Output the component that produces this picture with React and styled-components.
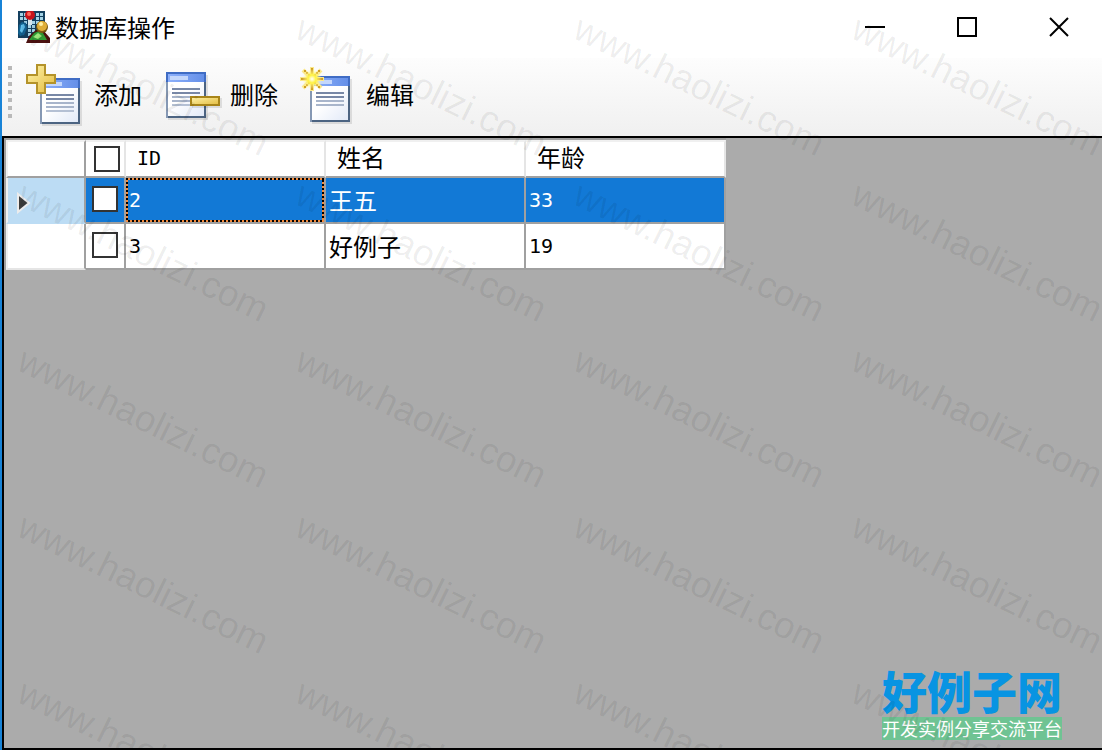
import React, { useState } from 'react';
import styled, { createGlobalStyle } from 'styled-components';

const initialRows = [
  { id: '2', name: '王五', age: '33' },
  { id: '3', name: '好例子', age: '19' },
];

const watermarks = Array.from({ length: 20 }, (_, i) => i);
const gripDots = Array.from({ length: 7 }, (_, i) => i);

const AppIcon = () => (
  <svg width="32" height="32" viewBox="0 0 32 32" aria-hidden="true">
    <rect width="27" height="27" fill="#14405f" />
    <path
      d="M2 2h3v3H2zM6 2h3v3H6zM18 2h3v3h-3zM22 2h3v3h-3zM2 6h3v3H2zM6 6h3v3H6zM18 6h3v3h-3zM22 6h3v3h-3zM6 10h3v3H6zM14 10h3v3h-3zM18 10h3v3h-3zM10 14h3v3h-3zM14 14h3v3h-3zM10 18h3v3h-3zM14 18h3v3h-3zM10 22h3v3h-3z"
      fill="#a4d3e6"
    />
    <path d="M10 8h4v6h-4z" fill="#d7e6ec" />
    <circle cx="12" cy="4" r="5" fill="#c8141b" />
    <circle cx="11" cy="3" r="2" fill="#ff6a5c" />
    <path d="M1 14l3-3 4 1 1 5-3 7-4 1-2-3z" fill="#12618f" />
    <path d="M3 14l3-1 1 3-3 6-2-2z" fill="#5fc0ee" />
    <path d="M8 32l3-7 7-6h7l7 8v5z" fill="#4b1110" />
    <path d="M11 29l5-7 5-2 4 2 4 7z" fill="#2f9b35" />
    <path d="M15 26l5-4 4 3-4 3z" fill="#9be67a" />
    <circle cx="24" cy="16" r="6" fill="#7a5b12" />
    <circle cx="24" cy="15" r="5" fill="#dfae38" />
    <circle cx="23" cy="13" r="2" fill="#fff0a6" />
  </svg>
);

const Sheet = ({ x, y, lines }) => (
  <g transform={`translate(${x} ${y})`}>
    <path d="M2 3h40v45H2z" fill="#000" opacity="0.1" />
    <rect width="40" height="46" fill="#4c6482" />
    <rect width="2" height="46" fill="#8598b4" />
    <rect x="2" y="10" width="36" height="34" fill="url(#paper)" />
    <rect width="40" height="10" fill="#3f6cc4" />
    <rect x="2" y="2" width="36" height="8" fill="url(#caption)" />
    <rect x="4" y="4" width="18" height="4" fill="#c4d7fb" />
    <path d="M6 16h28v2H6zM6 20h28v2H6z" fill="#7888a6" />
    <path d="M6 24h28v2H6zM6 28h28v2H6z" fill="#a8b5cb" />
    {lines > 4 && <path d="M6 32h28v2H6z" fill="#b4c0d4" />}
  </g>
);

const IconDefs = () => (
  <defs>
    <linearGradient id="paper" x1="0" y1="0" x2="1" y2="1">
      <stop offset="0.4" stopColor="#ffffff" />
      <stop offset="1" stopColor="#e2eaf8" />
    </linearGradient>
    <linearGradient id="caption">
      <stop offset="0" stopColor="#8db0fa" />
      <stop offset="1" stopColor="#648fe8" />
    </linearGradient>
    <linearGradient id="gold" x1="0" y1="0" x2="1" y2="1">
      <stop offset="0" stopColor="#fff3a8" />
      <stop offset="1" stopColor="#e3bb3f" />
    </linearGradient>
    <radialGradient id="spark">
      <stop offset="0" stopColor="#ffffff" />
      <stop offset="0.4" stopColor="#fff23e" />
      <stop offset="1" stopColor="#fff7b8" stopOpacity="0" />
    </radialGradient>
  </defs>
);

const AddIcon = () => (
  <svg width="64" height="64" viewBox="0 0 64 64" aria-hidden="true">
    <IconDefs />
    <Sheet x={16} y={16} lines={5} />
    <path
      d="M13 3h8v10h10v8H21v10h-8V21H3v-8h10z"
      fill="url(#gold)"
      stroke="#b4932a"
      strokeWidth="2"
    />
  </svg>
);

const DeleteIcon = () => (
  <svg width="64" height="64" viewBox="0 0 64 64" aria-hidden="true">
    <Sheet x={6} y={10} lines={5} />
    <path d="M32 36h30v10H32z" fill="#000" opacity="0.1" />
    <rect x="31" y="35" width="28" height="8" fill="url(#gold)" stroke="#a88519" strokeWidth="2" />
  </svg>
);

const EditIcon = () => (
  <svg width="64" height="64" viewBox="0 0 64 64" aria-hidden="true">
    <Sheet x={14} y={14} lines={4} />
    <path
      d="M16 5v24M4 17h24M7 8l18 18M25 8L7 26"
      stroke="#fbe88a"
      strokeWidth="4"
    />
    <path
      d="M15 6h2v6h-2zM15 22h2v6h-2zM5 16h6v2H5zM21 16h6v2h-6zM8 8h2v2h2v2h2v2h-2v-2h-2v-2H8zM24 8h-2v2h-2v2h-2v2h2v-2h2v-2h2zM8 26h2v-2h2v-2h2v-2h-2v2h-2v2H8zM24 26h-2v-2h-2v-2h-2v-2h2v2h2v2h2z"
      fill="#cf9f24"
    />
    <circle cx="16" cy="17" r="10" fill="url(#spark)" />
  </svg>
);

const App = () => {
  const [selected, setSelected] = useState('2');
  const [checked, setChecked] = useState({});

  const toggle = (id) => setChecked({ ...checked, [id]: !checked[id] });

  const allChecked = initialRows.every((row) => checked[row.id]);

  const toggleAll = () => {
    const next = {};
    initialRows.forEach((row) => {
      next[row.id] = !allChecked;
    });
    setChecked(next);
  };

  return (
    <Window>
      <GlobalStyle />
      <TitleBar>
        <AppIcon />
        <Title>数据库操作</Title>
        <WindowControls>
          <ControlButton type="button" aria-label="最小化">
            <svg width="20" height="20" viewBox="0 0 20 20">
              <path d="M0 10h20" />
            </svg>
          </ControlButton>
          <ControlButton type="button" aria-label="最大化">
            <svg width="20" height="20" viewBox="0 0 20 20">
              <path d="M1 1h18v18H1z" />
            </svg>
          </ControlButton>
          <ControlButton type="button" aria-label="关闭">
            <svg width="20" height="20" viewBox="0 0 20 20">
              <path d="M1 1l18 18M19 1L1 19" />
            </svg>
          </ControlButton>
        </WindowControls>
      </TitleBar>

      <ToolBar>
        <Grip>
          {gripDots.map((dot) => (
            <GripDot key={dot} />
          ))}
        </Grip>
        <ToolButton type="button">
          <AddIcon />
          添加
        </ToolButton>
        <ToolButton type="button">
          <DeleteIcon />
          删除
        </ToolButton>
        <ToolButton type="button">
          <EditIcon />
          编辑
        </ToolButton>
      </ToolBar>

      <GridPanel>
        <DataGrid>
          <colgroup>
            <Col $width={80} />
            <Col $width={40} />
            <Col $width={200} />
            <Col $width={200} />
            <Col $width={200} />
          </colgroup>
          <thead>
            <tr>
              <CornerCell />
              <CheckHeader>
                <CheckBox
                  type="checkbox"
                  aria-label="全选"
                  checked={allChecked}
                  onChange={toggleAll}
                />
              </CheckHeader>
              <HeaderCell $latin>ID</HeaderCell>
              <HeaderCell>姓名</HeaderCell>
              <HeaderCell>年龄</HeaderCell>
            </tr>
          </thead>
          <tbody>
            {initialRows.map((row) => {
              const active = row.id === selected;
              return (
                <tr key={row.id} onClick={() => setSelected(row.id)}>
                  <RowHeader $active={active}>
                    {active && (
                      <svg width="16" height="22" viewBox="0 0 16 22">
                        <path d="M2 2l11 9L2 20z" fill="#3c3c3c" stroke="#ececec" strokeWidth="2" />
                      </svg>
                    )}
                  </RowHeader>
                  <CheckCell $active={active}>
                    <CheckBox
                      type="checkbox"
                      aria-label={`选择 ${row.name}`}
                      checked={!!checked[row.id]}
                      onChange={() => toggle(row.id)}
                    />
                  </CheckCell>
                  <Cell $latin $active={active} $focused={active}>
                    {row.id}
                  </Cell>
                  <Cell $active={active}>{row.name}</Cell>
                  <Cell $latin $active={active}>
                    {row.age}
                  </Cell>
                </tr>
              );
            })}
          </tbody>
        </DataGrid>
      </GridPanel>

      <SiteMark>
        <SiteName>好例子网</SiteName>
        <SiteSlogan>开发实例分享交流平台</SiteSlogan>
      </SiteMark>

      <WatermarkLayer aria-hidden="true">
        {watermarks.map((mark) => (
          <WatermarkTile key={mark}>
            <WatermarkText>www.haolizi.com</WatermarkText>
          </WatermarkTile>
        ))}
      </WatermarkLayer>
    </Window>
  );
};

const GlobalStyle = createGlobalStyle`
  * {
    box-sizing: border-box;
  }

  body {
    margin: 0;
    background: #ffffff;
    font-family: 'Noto Sans CJK SC', sans-serif;
  }
`;

const Window = styled.div`
  position: relative;
  display: flex;
  flex-direction: column;
  min-height: 100vh;
  overflow: hidden;
  border-left: 2px solid #1883d7;
  background: #ffffff;
  color: #000000;
`;

const TitleBar = styled.header`
  display: flex;
  align-items: center;
  height: 58px;
  padding: 0 33px 5px 16px;
`;

const Title = styled.h1`
  margin: 0 0 0 5px;
  font-size: 24px;
  font-weight: 400;
  line-height: 32px;
`;

const WindowControls = styled.div`
  display: flex;
  gap: 72px;
  margin-left: auto;
`;

const ControlButton = styled.button`
  display: flex;
  padding: 0;
  border: none;
  background: none;

  svg {
    fill: none;
    stroke: #000000;
    stroke-width: 2;
  }
`;

const ToolBar = styled.div`
  display: flex;
  align-items: center;
  gap: 18px;
  height: 78px;
  padding: 0 6px;
  background: linear-gradient(#fdfdfd, #f0f0f0);
`;

const Grip = styled.div`
  display: flex;
  flex-direction: column;
  gap: 4px;
  width: 4px;
  margin-right: -6px;
  padding-bottom: 10px;
`;

const GripDot = styled.span`
  height: 4px;
  background: #b9b9b9;
`;

const ToolButton = styled.button`
  display: flex;
  align-items: center;
  gap: 6px;
  padding: 0 0 6px;
  border: none;
  background: none;
  color: #000000;
  font-family: inherit;
  font-size: 24px;
  line-height: 32px;
`;

const GridPanel = styled.main`
  flex: 1;
  border: 2px solid #000000;
  border-right: none;
  background: #ababab;
`;

const DataGrid = styled.table`
  width: 722px;
  table-layout: fixed;
  border-collapse: separate;
  border-spacing: 0;
  border-top: 2px solid #a0a0a0;
  border-left: 2px solid #a0a0a0;
`;

const Col = styled.col`
  width: ${(props) => props.$width}px;
`;

const HeaderCell = styled.th`
  height: 38px;
  padding: 0 11px ${(props) => (props.$latin ? 2 : 4)}px;
  border-top: 2px solid #f0f0f0;
  border-right: 2px solid #e5e5e5;
  border-bottom: 2px solid #a0a0a0;
  background: #ffffff;
  font-family: ${(props) =>
    props.$latin ? "'DejaVu Sans Mono', monospace" : "'Noto Sans CJK SC', sans-serif"};
  font-size: ${(props) => (props.$latin ? 20 : 24)}px;
  font-weight: 400;
  line-height: 28px;
  text-align: left;
`;

const CornerCell = styled(HeaderCell).attrs({ as: 'td' })`
  border-left: 2px solid #f0f0f0;
  border-right-color: #a0a0a0;
`;

const CheckHeader = styled(HeaderCell)`
  padding: 0 0 0 8px;
`;

const RowHeader = styled.th`
  height: 46px;
  padding: 6px 0 0 8px;
  border-left: 2px solid #f0f0f0;
  border-right: 2px solid #a0a0a0;
  border-bottom: 2px solid ${(props) => (props.$active ? '#bcdcf4' : '#e5e5e5')};
  background: ${(props) => (props.$active ? '#bcdcf4' : '#ffffff')};
  text-align: left;

  svg {
    display: block;
  }
`;

const Cell = styled.td`
  height: 46px;
  padding: 0 3px;
  border-right: 2px solid #a0a0a0;
  border-bottom: 2px solid #a0a0a0;
  background: ${(props) => (props.$active ? '#1279d6' : '#ffffff')};
  color: ${(props) => (props.$active ? '#ffffff' : '#000000')};
  font-family: ${(props) =>
    props.$latin ? "'DejaVu Sans Mono', monospace" : "'Noto Sans CJK SC', sans-serif"};
  font-size: ${(props) => (props.$latin ? 20 : 24)}px;
  line-height: 32px;

  ${(props) =>
    props.$focused &&
    `
    background:
      repeating-linear-gradient(90deg, #000 0 2px, #f58b3c 2px 4px) top / 100% 2px no-repeat,
      repeating-linear-gradient(90deg, #f58b3c 0 2px, #000 2px 4px) bottom / 100% 2px no-repeat,
      repeating-linear-gradient(#000 0 2px, #f58b3c 2px 4px) left / 2px 100% no-repeat,
      repeating-linear-gradient(#f58b3c 0 2px, #000 2px 4px) right / 2px 100% no-repeat,
      #1279d6;
    background-origin: padding-box;
    background-clip: padding-box;
  `}
`;

const CheckCell = styled(Cell)`
  padding: 0 0 2px 6px;
`;

const CheckBox = styled.input`
  display: block;
  appearance: none;
  width: 26px;
  height: 26px;
  margin: 0;
  border: 2px solid #333333;
  background: #ffffff;

  &:checked {
    background: #333333;
    box-shadow: inset 0 0 0 4px #ffffff;
  }
`;

const SiteMark = styled.aside`
  position: absolute;
  right: 40px;
  bottom: 10px;
  width: 180px;
`;

const SiteName = styled.div`
  padding-bottom: 2px;
  color: #0894e2;
  font-size: 45px;
  font-weight: 900;
  line-height: 48px;
  white-space: nowrap;
`;

const SiteSlogan = styled.div`
  background: #6fc393;
  color: #ffffff;
  font-size: 18px;
  line-height: 23px;
  white-space: nowrap;
`;

const WatermarkLayer = styled.div`
  position: absolute;
  inset: 0;
  display: grid;
  grid-template-columns: repeat(4, 278px);
  grid-auto-rows: 166px;
  padding-left: 13px;
  padding-top: 5px;
  overflow: hidden;
  pointer-events: none;
`;

const WatermarkTile = styled.div`
  width: 278px;
  height: 166px;
`;

const WatermarkText = styled.span`
  display: block;
  width: max-content;
  transform: rotate(26deg);
  transform-origin: 0 32px;
  color: rgba(0, 0, 0, 0.07);
  font-family: 'Liberation Sans', sans-serif;
  font-size: 37px;
  line-height: 40px;
`;

export default App;
